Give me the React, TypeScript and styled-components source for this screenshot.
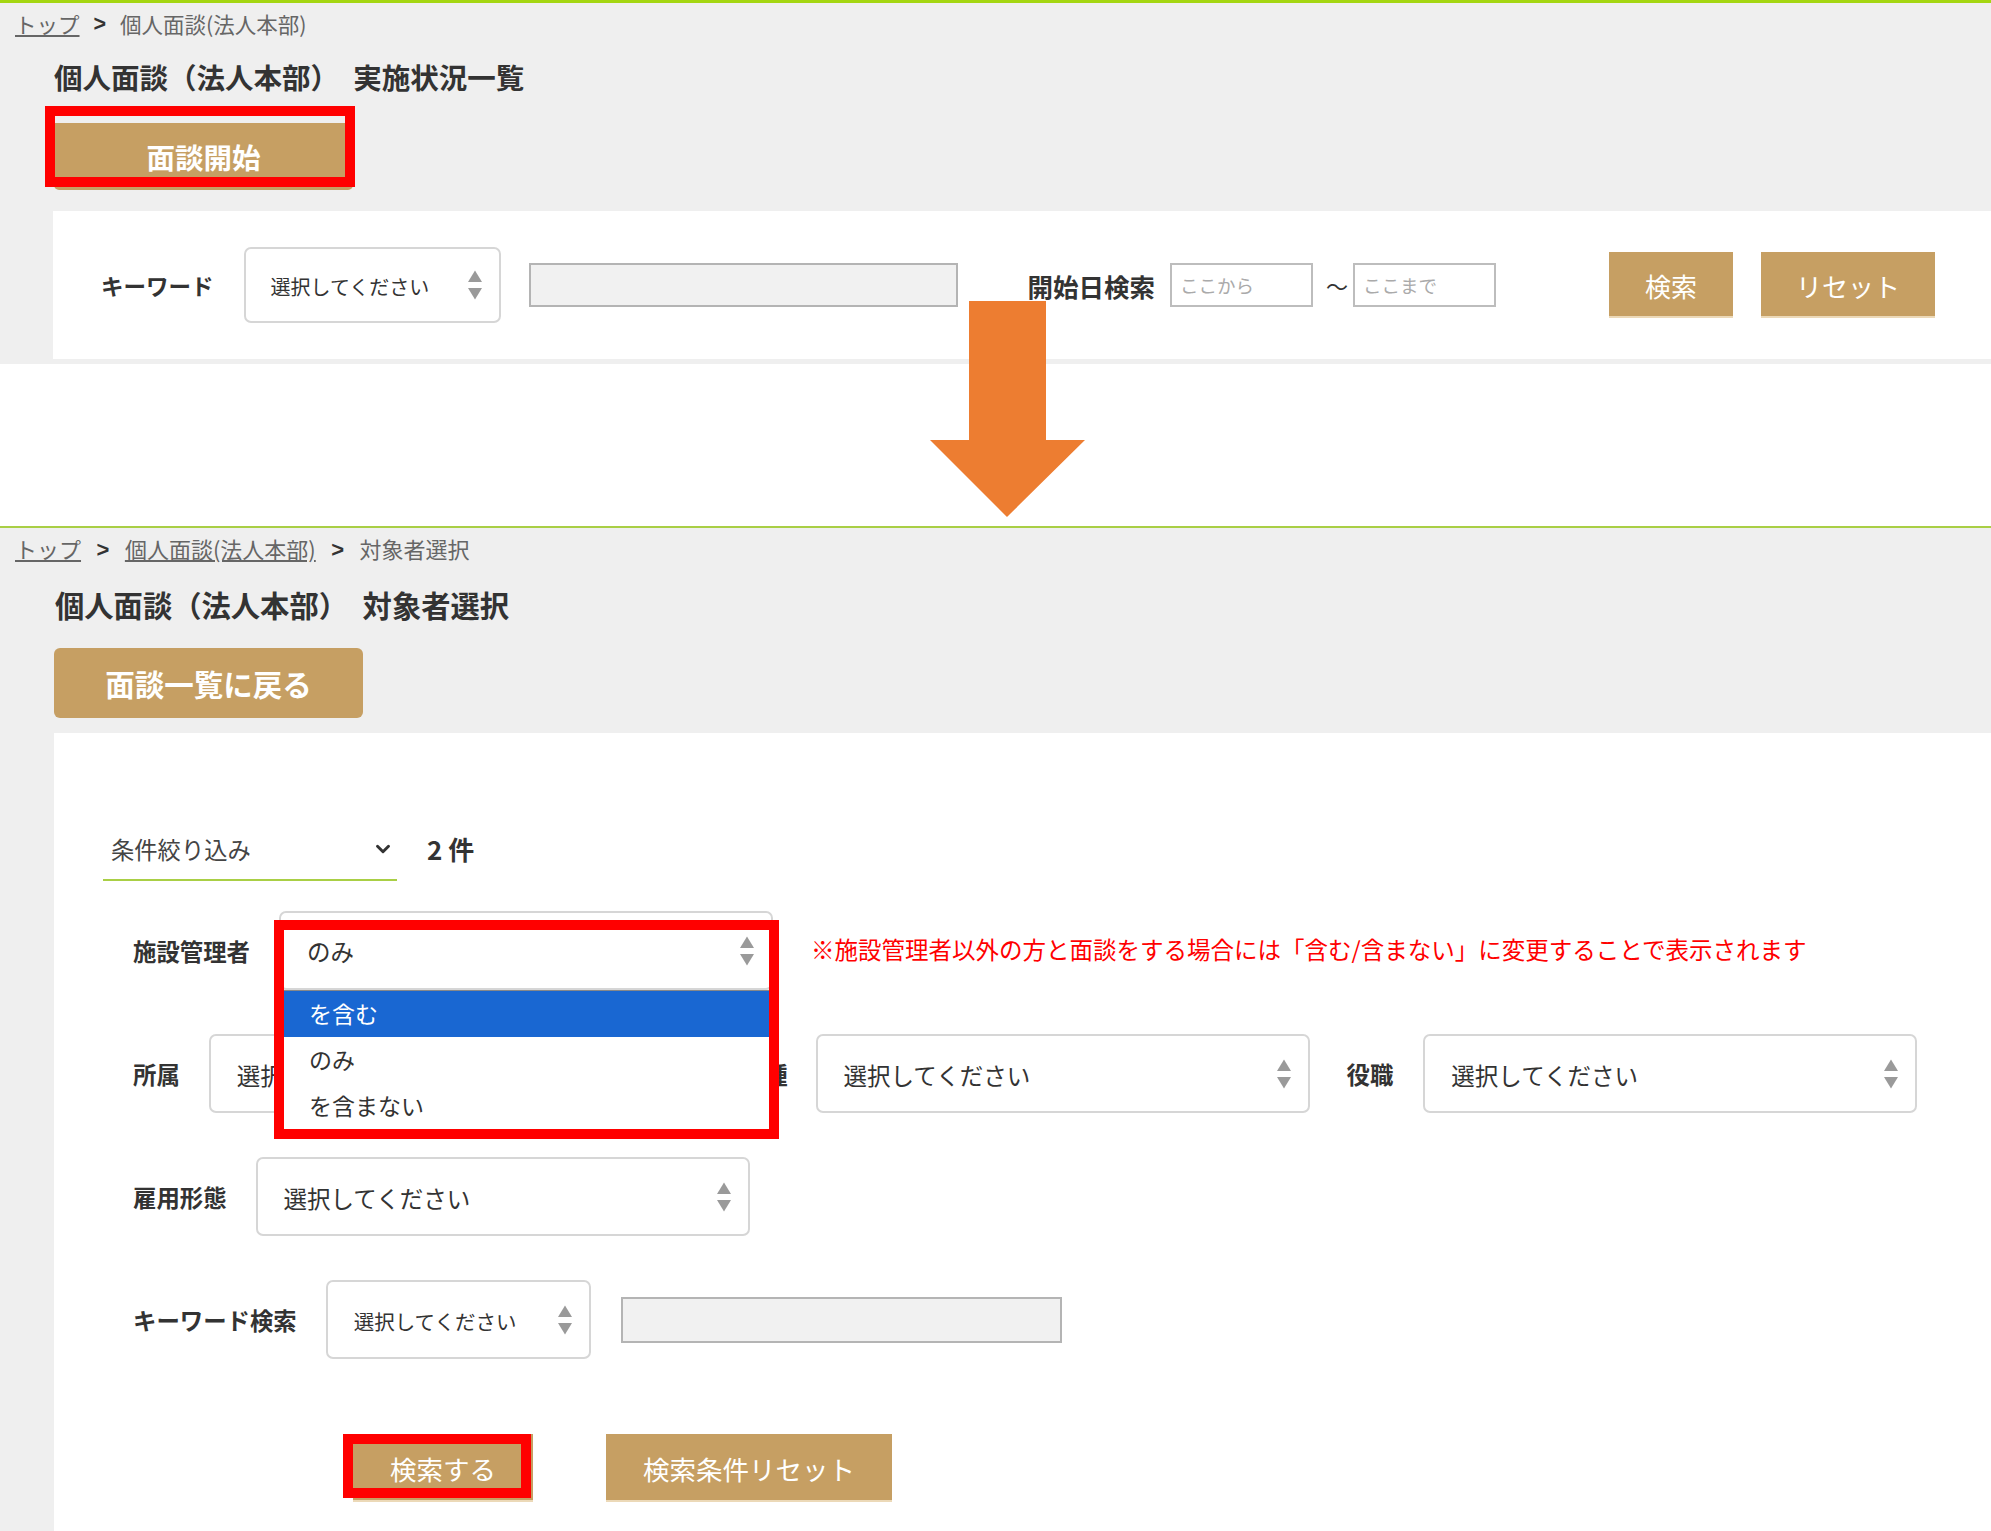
import styled, { createGlobalStyle } from "styled-components";
import { ChevronDown } from "lucide-react";

const GlobalStyle = createGlobalStyle`
  html, body {
    margin: 0;
    padding: 0;
    background: #fff;
    overflow: hidden;
  }
  * {
    box-sizing: border-box;
  }
  body {
    font-family: "Noto Sans CJK JP", "Noto Sans", sans-serif;
    color: #333;
  }
`;

const Page = styled.div`
  position: relative;
  display: flex;
  flex-direction: column;
  width: 1991px;
  height: 1531px;
  overflow: hidden;
`;

const ListScreen = styled.section`
  background: #efefef;
  border-top: 3px solid #a4d611;
  height: 364px;
  padding-bottom: 5px;
`;

const Spacer = styled.div`
  height: 162px;
  flex: none;
`;

const SelectScreen = styled.section`
  flex: 1;
  display: flex;
  flex-direction: column;
  background: #efefef;
  border-top: 2px solid #a9cf45;
`;

const Breadcrumb = styled.nav<{ $size: number; $gap: number }>`
  display: flex;
  align-items: center;
  gap: ${(p) => p.$gap}px;
  height: 40px;
  padding-left: 15px;
  font-size: ${(p) => p.$size}px;
  color: #666;
`;

const Crumb = styled.a`
  color: #666;
  text-decoration: underline;
`;

const CrumbSep = styled.span`
  margin-top: 3px;
  color: #333;
  font-weight: 700;
  font-family: "Liberation Sans", sans-serif;
`;

const Title = styled.h1<{ $size: number; $top: number; $left: number }>`
  margin: ${(p) => p.$top}px 0 0 ${(p) => p.$left}px;
  font-size: ${(p) => p.$size}px;
  line-height: 36px;
  font-weight: 700;
  color: #333;
`;

const StartButton = styled.button`
  position: relative;
  display: block;
  width: 299px;
  height: 67px;
  margin: 28px 0 0 54px;
  padding: 0;
  border: none;
  border-radius: 0 0 5px 5px;
  background: #c69f63;
  color: #fff;
  font: 700 28.5px "Noto Sans CJK JP", sans-serif;
`;

const BackButton = styled.button`
  display: block;
  width: 309px;
  height: 70px;
  margin: 26px 0 0 54px;
  padding: 0;
  border: none;
  border-radius: 6px;
  background: #c69f63;
  color: #fff;
  font: 700 29.5px "Noto Sans CJK JP", sans-serif;
`;

const Highlight = styled.div<{ $x: number; $y: number; $w: number; $h: number }>`
  position: absolute;
  left: ${(p) => p.$x}px;
  top: ${(p) => p.$y}px;
  width: ${(p) => p.$w}px;
  height: ${(p) => p.$h}px;
  border: 10px solid #ff0000;
  pointer-events: none;
  z-index: 5;
`;

const SearchPanel = styled.div`
  display: flex;
  align-items: center;
  height: 148px;
  margin: 21px 0 0 53px;
  padding-left: 48px;
  background: #fff;
`;

const FieldLabel = styled.label<{ $size?: number; $ml?: number }>`
  flex: none;
  margin-left: ${(p) => p.$ml ?? 0}px;
  font-size: ${(p) => p.$size ?? 23.4}px;
  font-weight: 700;
  color: #333;
`;

const SelectBox = styled.div<{ $w: number; $h?: number; $ml: number; $size?: number; $pad?: number }>`
  position: relative;
  flex: none;
  display: flex;
  align-items: center;
  justify-content: space-between;
  width: ${(p) => p.$w}px;
  height: ${(p) => p.$h ?? 79}px;
  margin-left: ${(p) => p.$ml}px;
  padding: 0 17px 0 ${(p) => p.$pad ?? 26}px;
  border: 2px solid #d6d6d6;
  border-radius: 7px;
  background: #fff;
  font-size: ${(p) => p.$size ?? 23.5}px;
  color: #333;
`;

const SelectText = styled.span<{ $raise?: boolean }>`
  padding-top: ${(p) => (p.$raise ? 1 : 3)}px;
`;

const GrayInput = styled.input<{ $w: number; $h: number; $ml: number }>`
  flex: none;
  width: ${(p) => p.$w}px;
  height: ${(p) => p.$h}px;
  margin-left: ${(p) => p.$ml}px;
  border: 2px solid #b4b4b4;
  background: #f1f1f1;
`;

const DateInput = styled.input<{ $ml: number }>`
  flex: none;
  width: 143px;
  height: 44px;
  margin-left: ${(p) => p.$ml}px;
  padding: 0 8px;
  border: 2px solid #bdbdbd;
  background: #fff;
  font: 18.5px "Noto Sans CJK JP", sans-serif;
  &::placeholder {
    color: #aaa;
    opacity: 1;
  }
`;

const Tilde = styled.span`
  flex: none;
  width: 22px;
  margin-left: 13px;
  font-size: 22px;
  text-align: center;
  color: #333;
`;

const TanButton = styled.button<{ $w: number; $h: number; $ml: number; $size?: number }>`
  position: relative;
  flex: none;
  width: ${(p) => p.$w}px;
  height: ${(p) => p.$h}px;
  margin-left: ${(p) => p.$ml}px;
  padding: 2px 0 0;
  border: none;
  border-bottom: 2px solid #ecd9b8;
  background: #c69f63;
  color: #fff;
  font: 400 ${(p) => p.$size ?? 26}px "Noto Sans CJK JP", sans-serif;
`;

const ResultPanel = styled.div`
  flex: 1;
  margin: 15px 0 0 54px;
  padding: 87px 0 0 49px;
  background: #fff;
`;

const FilterRow = styled.div`
  display: flex;
  align-items: flex-start;
  height: 61px;
`;

const FilterToggle = styled.div`
  display: flex;
  align-items: center;
  justify-content: space-between;
  width: 294px;
  height: 61px;
  padding: 0 3px 2px 8px;
  border-bottom: 2px solid #a9cf45;
  font-size: 23.3px;
  color: #444;
`;

const FilterCount = styled.strong`
  margin-left: 30px;
  line-height: 58px;
  font-size: 26px;
  font-weight: 700;
  color: #333;
`;

const Form = styled.div`
  display: flex;
  flex-direction: column;
  gap: 44px;
  margin: 30px 0 0 30px;
`;

const FormRow = styled.div`
  display: flex;
  align-items: center;
  height: 79px;
`;

const Note = styled.p`
  flex: none;
  margin: 0 0 4px 38px;
  font-size: 23.5px;
  color: #ff0000;
`;

const Dropdown = styled.ul`
  position: absolute;
  left: -2px;
  right: -2px;
  top: 77px;
  margin: 0;
  padding: 0;
  height: 142px;
  list-style: none;
  background: #fff;
  border-top: 1px solid #888;
  z-index: 4;
`;

const DropdownItem = styled.li<{ $active?: boolean }>`
  display: flex;
  align-items: center;
  height: 46px;
  padding: 0 0 2px 30px;
  background: ${(p) => (p.$active ? "#1967d2" : "#fff")};
  color: ${(p) => (p.$active ? "#fff" : "#333")};
  font-size: 23px;
`;

const ActionRow = styled.div`
  display: flex;
  margin: 75px 0 0 250px;
`;

const ArrowOverlay = styled.svg`
  position: absolute;
  left: 930px;
  top: 301px;
  z-index: 6;
`;

function SortArrows() {
  return (
    <svg width="14" height="30" viewBox="0 0 14 30" aria-hidden="true">
      <polygon points="7,0.5 14,12 0,12" fill="#9a9a9a" />
      <polygon points="0,18 14,18 7,29.5" fill="#9a9a9a" />
    </svg>
  );
}

function Select(props: { w: number; ml: number; size?: number; text?: string; raise?: boolean; children?: React.ReactNode }) {
  return (
    <SelectBox $w={props.w} $ml={props.ml} $size={props.size}>
      <SelectText $raise={props.raise}>{props.text ?? "選択してください"}</SelectText>
      <SortArrows />
      {props.children}
    </SelectBox>
  );
}

export default function App() {
  return (
    <Page>
      <GlobalStyle />
      <ListScreen>
        <Breadcrumb $size={21.5} $gap={14}>
          <Crumb>トップ</Crumb>
          <CrumbSep>&gt;</CrumbSep>
          <span>個人面談(法人本部)</span>
        </Breadcrumb>
        <Title $size={28.5} $top={16} $left={54}>個人面談（法人本部）　実施状況一覧</Title>
        <StartButton>
          面談開始
          <Highlight $x={-9} $y={-17} $w={310} $h={81} />
        </StartButton>
        <SearchPanel>
          <FieldLabel $size={22.5}>キーワード</FieldLabel>
          <SelectBox $w={257} $h={76} $ml={30} $size={20} $pad={25}>
            <SelectText>選択してください</SelectText>
            <SortArrows />
          </SelectBox>
          <GrayInput $w={429} $h={44} $ml={28} />
          <FieldLabel $size={25.5} $ml={70}>開始日検索</FieldLabel>
          <DateInput $ml={15} placeholder="ここから" />
          <Tilde>～</Tilde>
          <DateInput $ml={5} placeholder="ここまで" />
          <TanButton $w={124} $h={66} $ml={113}>検索</TanButton>
          <TanButton $w={174} $h={66} $ml={28}>リセット</TanButton>
        </SearchPanel>
      </ListScreen>

      <Spacer />

      <SelectScreen>
        <Breadcrumb $size={22} $gap={15.5}>
          <Crumb>トップ</Crumb>
          <CrumbSep>&gt;</CrumbSep>
          <Crumb>個人面談(法人本部)</Crumb>
          <CrumbSep>&gt;</CrumbSep>
          <span>対象者選択</span>
        </Breadcrumb>
        <Title $size={29.3} $top={18} $left={55}>個人面談（法人本部）　対象者選択</Title>
        <BackButton>面談一覧に戻る</BackButton>
        <ResultPanel>
          <FilterRow>
            <FilterToggle>
              条件絞り込み
              <ChevronDown size={22} strokeWidth={3.2} color="#333" />
            </FilterToggle>
            <FilterCount>2 件</FilterCount>
          </FilterRow>
          <Form>
            <FormRow>
              <FieldLabel>施設管理者</FieldLabel>
              <Select w={494} ml={29} text="のみ" raise>
                <Dropdown>
                  <DropdownItem $active>を含む</DropdownItem>
                  <DropdownItem>のみ</DropdownItem>
                  <DropdownItem>を含まない</DropdownItem>
                </Dropdown>
                <Highlight $x={-7} $y={7} $w={505} $h={219} />
              </Select>
              <Note>※施設管理者以外の方と面談をする場合には「含む/含まない」に変更することで表示されます</Note>
            </FormRow>
            <FormRow>
              <FieldLabel>所属</FieldLabel>
              <Select w={494} ml={29} />
              <FieldLabel $ml={38}>職種</FieldLabel>
              <Select w={494} ml={28} />
              <FieldLabel $ml={37}>役職</FieldLabel>
              <Select w={494} ml={30} />
            </FormRow>
            <FormRow>
              <FieldLabel>雇用形態</FieldLabel>
              <Select w={494} ml={29} />
            </FormRow>
            <FormRow>
              <FieldLabel>キーワード検索</FieldLabel>
              <Select w={265} ml={29} size={20.5} />
              <GrayInput $w={441} $h={46} $ml={30} />
            </FormRow>
          </Form>
          <ActionRow>
            <TanButton $w={180} $h={68} $ml={0} $size={26.5}>
              検索する
              <Highlight $x={-10} $y={0} $w={188} $h={64} />
            </TanButton>
            <TanButton $w={286} $h={68} $ml={73} $size={26.5}>検索条件リセット</TanButton>
          </ActionRow>
        </ResultPanel>
      </SelectScreen>

      <ArrowOverlay width="155" height="216" viewBox="0 0 155 216" aria-hidden="true">
        <polygon points="39,0 116,0 116,139 155,139 77,216 0,139 39,139" fill="#ed7d31" />
      </ArrowOverlay>
    </Page>
  );
}
